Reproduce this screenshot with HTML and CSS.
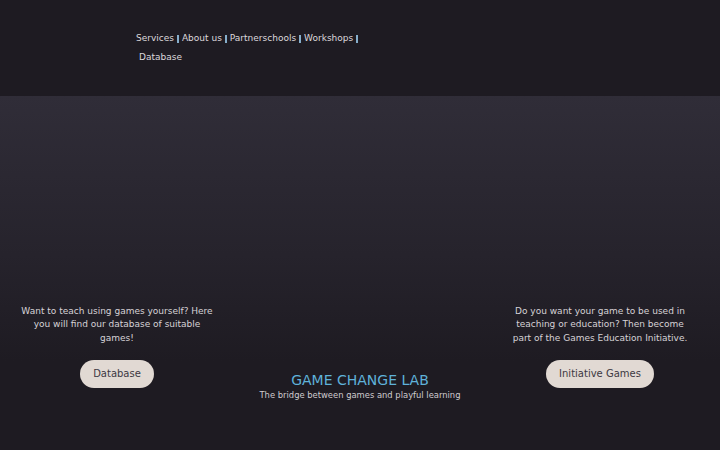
FILE: index.html
```html
<!DOCTYPE html>
<html lang="en">
<head>
<meta charset="utf-8">
<title>Game Change Lab</title>
<link rel="stylesheet" href="styles.css">
</head>
<body>
<header class="top">
  <nav class="nav">
    <a class="nav-link" href="#">Services</a><span class="sep"></span>
    <a class="nav-link" href="#">About us</a><span class="sep"></span>
    <a class="nav-link" href="#">Partnerschools</a><span class="sep"></span>
    <a class="nav-link" href="#">Workshops</a><span class="sep"></span>
    <a class="nav-link nav-last" href="#">Database</a>
  </nav>
</header>
<main class="hero">
  <section class="col col-side">
    <p class="blurb blurb-left">Want to teach using games yourself? Here you will find our database of suitable games!</p>
    <a class="btn" href="#">Database</a>
  </section>
  <section class="col col-center">
    <h1 class="title">GAME CHANGE LAB</h1>
    <p class="tagline">The bridge between games and playful learning</p>
  </section>
  <section class="col col-side">
    <p class="blurb blurb-right">Do you want your game to be used in teaching or education? Then become part of the Games Education Initiative.</p>
    <a class="btn" href="#">Initiative Games</a>
  </section>
</main>
</body>
</html>
```
FILE: styles.css
```css
html, body {
  margin: 0;
  padding: 0;
  height: 100%;
}
body {
  font-family: "DejaVu Sans", "Liberation Sans", sans-serif;
  background: #1e1b22;
  color: #d6d2d6;
  display: flex;
  flex-direction: column;
}
.top {
  height: 96px;
  box-sizing: border-box;
  background: #1e1b22;
  padding: 29px 0 0 136px;
}
.nav {
  display: flex;
  flex-wrap: wrap;
  align-items: center;
  width: 232px;
  font-size: 9px;
  line-height: 19px;
}
.nav-link {
  color: #dcd8dc;
  text-decoration: none;
}
.nav-last {
  margin-left: 3px;
}
.sep {
  display: inline-block;
  width: 2px;
  height: 8px;
  margin: 1px 3px 0 3px;
  background: #86aecb;
}
.hero {
  flex: 1;
  display: grid;
  grid-template-columns: 1fr 1fr 1fr;
  align-items: end;
  background: linear-gradient(180deg, #302d38 0%, #26232c 45%, #1e1b22 75%, #1e1b22 100%);
}
.col {
  display: flex;
  flex-direction: column;
  align-items: center;
  text-align: center;
}
.col-side {
  padding-bottom: 62px;
}
.col-center {
  padding-bottom: 49px;
}
.blurb {
  margin: 0 0 15px;
  font-size: 9px;
  line-height: 13.5px;
  color: #d6d2d6;
}
.blurb-left {
  max-width: 196px;
  margin-right: 6px;
}
.blurb-right {
  max-width: 180px;
}
.btn {
  display: block;
  height: 28px;
  line-height: 28px;
  padding: 0 13.5px;
  border-radius: 14px;
  background: #e1d9d3;
  color: #3c3842;
  font-size: 10px;
  text-decoration: none;
}
.col-side:first-child .btn {
  margin-right: 6px;
}
.title {
  margin: 0;
  font-size: 14px;
  font-weight: normal;
  line-height: 16px;
  margin-top: 1px;
  color: #5fb2da;
}
.tagline {
  margin: 1px 0 0;
  font-size: 8.4px;
  line-height: 12px;
  color: #d0ccd0;
}
```
